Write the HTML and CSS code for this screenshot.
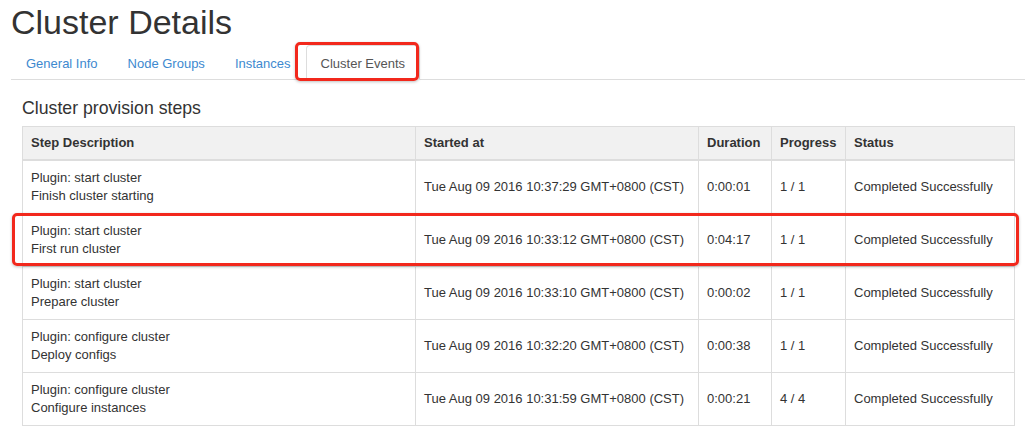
FILE: index.html
```html
<!DOCTYPE html>
<html lang="en">
<head>
<meta charset="utf-8">
<title>Cluster Details</title>
<link rel="stylesheet" href="styles.css">
</head>
<body>
<div class="page">
  <h1 class="title">Cluster Details</h1>
  <ul class="tabs">
    <li class="tab"><a href="#">General Info</a></li>
    <li class="tab"><a href="#">Node Groups</a></li>
    <li class="tab"><a href="#">Instances</a></li>
    <li class="tab active"><a href="#">Cluster Events</a><span class="mark mark-tab"></span></li>
  </ul>
  <div class="content">
    <h4 class="section-title">Cluster provision steps</h4>
    <div class="table-wrap">
      <table class="steps">
        <thead>
          <tr>
            <th class="c-desc">Step Description</th>
            <th class="c-start">Started at</th>
            <th class="c-dur">Duration</th>
            <th class="c-prog">Progress</th>
            <th class="c-stat">Status</th>
          </tr>
        </thead>
        <tbody>
          <tr>
            <td>Plugin: start cluster<br>Finish cluster starting</td>
            <td>Tue Aug 09 2016 10:37:29 GMT+0800 (CST)</td>
            <td>0:00:01</td>
            <td>1 / 1</td>
            <td>Completed Successfully</td>
          </tr>
          <tr>
            <td>Plugin: start cluster<br>First run cluster</td>
            <td>Tue Aug 09 2016 10:33:12 GMT+0800 (CST)</td>
            <td>0:04:17</td>
            <td>1 / 1</td>
            <td>Completed Successfully</td>
          </tr>
          <tr>
            <td>Plugin: start cluster<br>Prepare cluster</td>
            <td>Tue Aug 09 2016 10:33:10 GMT+0800 (CST)</td>
            <td>0:00:02</td>
            <td>1 / 1</td>
            <td>Completed Successfully</td>
          </tr>
          <tr>
            <td>Plugin: configure cluster<br>Deploy configs</td>
            <td>Tue Aug 09 2016 10:32:20 GMT+0800 (CST)</td>
            <td>0:00:38</td>
            <td>1 / 1</td>
            <td>Completed Successfully</td>
          </tr>
          <tr>
            <td>Plugin: configure cluster<br>Configure instances</td>
            <td>Tue Aug 09 2016 10:31:59 GMT+0800 (CST)</td>
            <td>0:00:21</td>
            <td>4 / 4</td>
            <td>Completed Successfully</td>
          </tr>
        </tbody>
      </table>
      <span class="mark mark-row"></span>
    </div>
  </div>
</div>
</body>
</html>
```

FILE: styles.css
```css
html, body {
  margin: 0;
  padding: 0;
  background: #fff;
}

body {
  font-family: "Liberation Sans", Arial, Helvetica, sans-serif;
  font-size: 13px;
  line-height: 18px;
  color: #333;
  overflow: hidden;
}

.page {
  padding: 0 8px 0 11px;
}

.title {
  margin: 0;
  padding-top: 4px;
  font-size: 34px;
  line-height: 37px;
  font-weight: 400;
  color: #333;
}

.tabs {
  list-style: none;
  margin: 4px 0 0;
  padding: 0;
  display: flex;
  border-bottom: 1px solid #ddd;
}

.tab {
  position: relative;
  margin-bottom: -1px;
}

.tab a {
  display: block;
  padding: 9px 14px 7px;
  line-height: 17px;
  font-size: 13px;
  color: #3d89cf;
  text-decoration: none;
  border: 1px solid transparent;
  border-radius: 4px 4px 0 0;
}

.tab.active a {
  color: #555;
  background: #fff;
  border-color: #ddd;
  border-bottom-color: transparent;
}

.mark {
  position: absolute;
  border: 3px solid #f2281c;
  border-radius: 5px;
  box-shadow: 0 1px 3px rgba(0, 0, 0, 0.25);
  pointer-events: none;
}

.mark-tab {
  left: -11px;
  right: 1px;
  top: -3px;
  bottom: -1px;
}

.content {
  padding: 0 10px 0 11px;
}

.section-title {
  margin: 18px 0 8px;
  font-size: 17.7px;
  line-height: 20px;
  font-weight: 400;
  color: #333;
}

.table-wrap {
  position: relative;
}

.steps {
  width: 100%;
  table-layout: fixed;
  border-collapse: collapse;
  border: 1px solid #ddd;
}

.steps th,
.steps td {
  border: 1px solid #ddd;
  text-align: left;
  vertical-align: middle;
  padding: 8px;
  line-height: 18px;
  white-space: nowrap;
  overflow: hidden;
}

.steps thead th {
  background: #f1f1f1;
  font-weight: 700;
  padding: 7px 8px;
  border-bottom-width: 2px;
}

.c-desc { width: 376px; }
.c-start { width: 266px; }
.c-dur { width: 56px; }
.c-prog { width: 57px; }
.c-stat { width: auto; }

.mark-row {
  left: -10px;
  right: -4px;
  top: 87px;
  height: 47px;
}
```
